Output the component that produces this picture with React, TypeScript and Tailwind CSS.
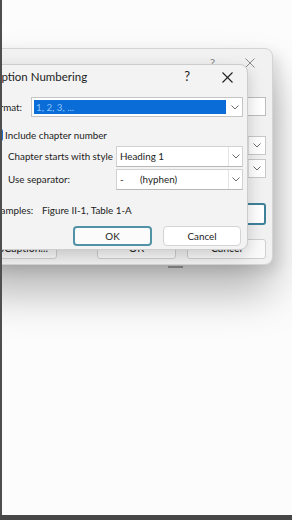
import React from "react";

const Chevron = ({ color = "#6b6b6b" }: { color?: string }) => (
  <svg width="8" height="5" viewBox="0 0 8 5" fill="none">
    <polyline points="0.5,0.5 4,4 7.5,0.5" stroke={color} strokeWidth="1" />
  </svg>
);

const CloseX = ({ size = 11, color = "#222" }: { size?: number; color?: string }) => (
  <svg width={size} height={size} viewBox="0 0 11 11" fill="none">
    <line x1="0.5" y1="0.5" x2="10.5" y2="10.5" stroke={color} strokeWidth="1.1" />
    <line x1="10.5" y1="0.5" x2="0.5" y2="10.5" stroke={color} strokeWidth="1.1" />
  </svg>
);

const Dropdown = ({ w, text }: { w: string; text: React.ReactNode }) => (
  <div className={`${w} h-[21px] flex bg-white border border-[#d2d2d2] border-b-[#b8b8b8]`}>
    <div className="flex-1 flex items-center pl-[3px] text-[9.8px] text-[#1c1c1c] whitespace-nowrap">{text}</div>
    <div className="w-[14px] border-l border-[#e4e4e4] flex items-center justify-center">
      <Chevron />
    </div>
  </div>
);

export default function App() {
  return (
    <div
      className="relative w-[292px] h-[520px] overflow-hidden bg-[#fcfcfc] whitespace-nowrap"
      style={{ fontFamily: 'Lato, "Noto Sans", sans-serif' }}
    >
      {/* background (Caption) dialog */}
      <div className="absolute left-[-30px] top-[48px] w-[303px] h-[217px] rounded-[8px] bg-[#f1f1f1] border border-[#d4d4d4] shadow-[0_28px_44px_rgba(0,0,0,0.28),6px_6px_14px_rgba(0,0,0,0.10)] flex flex-col pr-[6px]">
        <div className="h-[28px] flex items-center justify-end gap-[30px] pr-[11px] text-[#8a8a8a]">
          <span className="text-[12px]">?</span>
          <CloseX size={10} color="#8a8a8a" />
        </div>
        <div className="mt-[20px] self-end w-[90px] h-[19px] bg-white border border-[#bdbdbd]" />
        <div className="mt-[20px] self-end w-[90px] h-[19px] bg-white border border-[#c8c8c8] flex justify-end">
          <div className="w-[17px] border-l border-[#e0e0e0] flex items-center justify-center"><Chevron /></div>
        </div>
        <div className="mt-[4px] self-end w-[90px] h-[19px] bg-white border border-[#c8c8c8] flex justify-end">
          <div className="w-[17px] border-l border-[#e0e0e0] flex items-center justify-center"><Chevron /></div>
        </div>
        <div className="mt-[25px] self-end w-[90px] h-[22px] bg-white border-2 border-[#3f8198] rounded-[3px]" />
        <div className="mt-[14px] flex items-start">
          <div className="w-[86px] h-[20px] bg-[#fafafa] border border-[#cfcfcf] rounded-[3px] flex items-center justify-end pr-[8px] text-[10.5px] text-[#222]">AutoCaption...</div>
          <div className="ml-[40px] w-[79px] h-[20px] bg-[#fafafa] border border-[#cfcfcf] rounded-[3px] flex items-center justify-center text-[10.5px] text-[#222]">OK</div>
          <div className="ml-[11px] w-[79px] h-[20px] bg-[#fafafa] border border-[#cfcfcf] rounded-[3px] flex items-center justify-center text-[10.5px] text-[#222]">Cancel</div>
        </div>
      </div>
      <div className="absolute left-[168px] top-[266px] w-[15px] h-[2px] bg-[#7a7a7a]" />

      {/* front (Caption Numbering) dialog */}
      <div className="absolute left-[-24px] top-[64px] w-[272px] h-[186px] rounded-[8px] bg-[#f3f3f3] border border-[#cdcdcd] shadow-[0_6px_16px_rgba(0,0,0,0.18)] flex flex-col text-[#1c1c1c]">
        <div className="h-[24px] flex items-center pl-[11px] pr-[14px]">
          <span className="text-[11.5px] flex-1">Caption Numbering</span>
          <span className="text-[13px] mr-[32px]">?</span>
          <CloseX size={11} color="#1f1f1f" />
        </div>
        <div className="mt-[8px] h-[20px] flex items-center pl-[12px]">
          <span className="text-[9.8px] w-[42px]">Format:</span>
          <div className="w-[212px] h-[20px] flex bg-white border border-[#c4c4c4]">
            <div className="flex-1 m-[2px] bg-[#0a6cd6] flex items-center pl-[2px] text-[9.8px] text-[#8cc4ff]">1, 2, 3, ...</div>
            <div className="w-[14px] flex items-center justify-center"><Chevron /></div>
          </div>
        </div>
        <div className="mt-[11px] h-[14px] flex items-center pl-[14px]">
          <div className="w-[12px] h-[12px] rounded-[2px] bg-[#1f6fd0]" />
          <span className="ml-[2px] text-[9.8px]">Include chapter number</span>
        </div>
        <div className="mt-[4px] h-[21px] flex items-center pl-[31px]">
          <span className="text-[9.8px] w-[108px]">Chapter starts with style</span>
          <Dropdown w="w-[127px]" text="Heading 1" />
        </div>
        <div className="mt-[2px] h-[21px] flex items-center pl-[31px]">
          <span className="text-[9.8px] w-[108px]">Use separator:</span>
          <Dropdown
            w="w-[127px]"
            text={
              <>
                <span className="w-[20px]">-</span>
                <span>(hyphen)</span>
              </>
            }
          />
        </div>
        <div className="mt-[13px] h-[14px] flex items-center pl-[13px] text-[9.8px]">
          <span className="w-[52px]">Examples:</span>
          <span>Figure II-1, Table 1-A</span>
        </div>
        <div className="mt-[9px] h-[20px] flex items-center pl-[96px]">
          <div className="w-[79px] h-[20px] bg-[#fbfbfb] border-2 border-[#5192a6] rounded-[4px] flex items-center justify-center text-[9.8px]">OK</div>
          <div className="ml-[11px] w-[78px] h-[20px] bg-white border border-[#d4d4d4] rounded-[4px] flex items-center justify-center text-[9.8px]">Cancel</div>
        </div>
      </div>

      {/* screen edges */}
      <div className="absolute left-0 top-0 w-[2px] h-[520px] bg-[#4e4e4e]" />
      <div className="absolute left-0 bottom-0 w-[292px] h-[5px] bg-[#474747]" />
    </div>
  );
}
